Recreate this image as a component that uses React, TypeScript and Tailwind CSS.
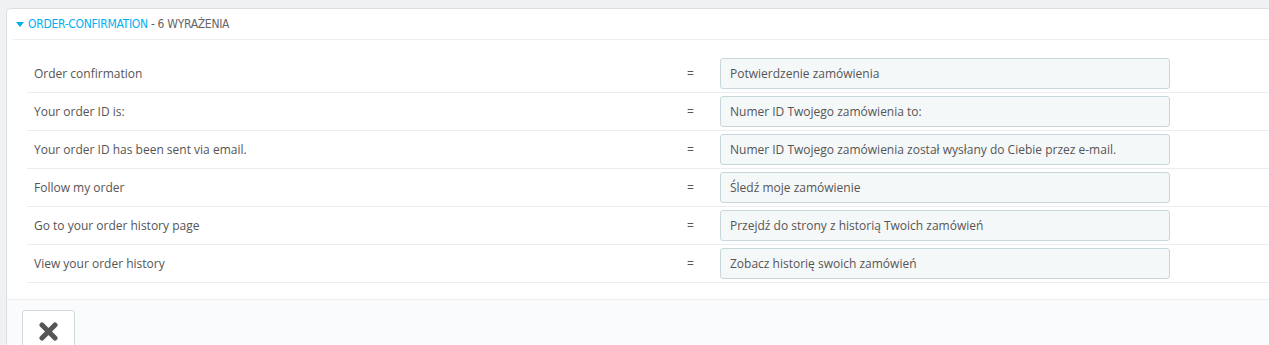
import React from "react";

const rows: [string, string][] = [
  ["Order confirmation", "Potwierdzenie zamówienia"],
  ["Your order ID is:", "Numer ID Twojego zamówienia to:"],
  ["Your order ID has been sent via email.", "Numer ID Twojego zamówienia został wysłany do Ciebie przez e-mail."],
  ["Follow my order", "Śledź moje zamówienie"],
  ["Go to your order history page", "Przejdź do strony z historią Twoich zamówień"],
  ["View your order history", "Zobacz historię swoich zamówień"],
];

export default function App() {
  return (
    <div className="min-h-[345px] bg-[#eff1f2] pt-[8px] pl-[6px] overflow-hidden" style={{ fontFamily: '"Open Sans", sans-serif' }}>
      <div className="bg-white border border-r-0 border-[#dcdfe2] rounded-tl-[5px] mr-[-10px]">
        <div className="h-[31px] mx-[6px] border-b border-[#eeeeee] flex items-center pl-[3px]">
          <svg width="8" height="5" viewBox="0 0 8 5" className="mr-[4px] mt-[1px]">
            <path d="M0 0 L8 0 L4 5 Z" fill="#00aff0" />
          </svg>
          <span className="text-[12px] tracking-[-0.3px] uppercase" style={{ fontFamily: '"DejaVu Sans Condensed", "Open Sans", sans-serif' }}>
            <span className="text-[#00aff0]">order-confirmation</span>
            <span className="text-[#666666]"> - 6 wyrażenia</span>
          </span>
        </div>
        <div className="pl-[20px] pt-[15px] pb-[16px]">
          {rows.map(([a, b]) => (
            <div key={a} className="h-[38px] flex items-center border-b border-[#eaedef] text-[12px] text-[#555555]">
              <div className="w-[640px] pl-[7px]">{a}</div>
              <div className="w-[53px] pl-[20px]">=</div>
              <div className="w-[450px] h-[31px] flex items-center pl-[9px] bg-[#f5f8f9] border border-[#c7d6db] rounded-[3px]">{b}</div>
            </div>
          ))}
        </div>
        <div className="bg-[#fafbfc] border-t border-[#eeeeee] pt-[10px] pl-[15px] h-[80px]">
          <div className="w-[53px] h-[60px] bg-white border border-[#d3d8db] rounded-[3px] flex justify-center pt-[11px]">
            <svg width="19" height="19" viewBox="0 0 19 19">
              <path d="M3 3 L16 16 M16 3 L3 16" stroke="#555555" strokeWidth="5" strokeLinecap="round" />
            </svg>
          </div>
        </div>
      </div>
    </div>
  );
}
